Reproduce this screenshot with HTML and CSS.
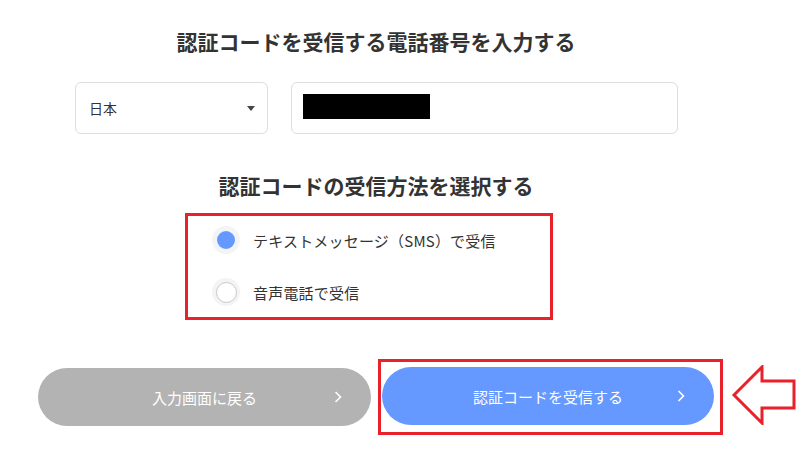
FILE: index.html
```html
<!DOCTYPE html>
<html lang="ja">
<head>
    <meta charset="UTF-8">
    <meta name="viewport" content="width=device-width, initial-scale=1.0">
    <title>認証コード</title>
    <link rel="stylesheet" href="styles.css">
</head>
<body>
    <div class="page">
        <h1>認証コードを受信する電話番号を入力する</h1>

        <div class="phone-row">
            <div class="select">
                <span>日本</span>
                <span class="caret"></span>
            </div>
            <div class="phone-input">
                <div class="masked"></div>
            </div>
        </div>

        <h1 class="sub">認証コードの受信方法を選択する</h1>

        <div class="methods mark">
            <label class="method">
                <input type="radio" name="method" checked>
                <span class="dot"></span>
                <span>テキストメッセージ（SMS）で受信</span>
            </label>
            <label class="method">
                <input type="radio" name="method">
                <span class="dot"></span>
                <span>音声電話で受信</span>
            </label>
        </div>

        <div class="actions">
            <button class="btn btn-back">
                <span></span>
                <span>入力画面に戻る</span>
                <svg class="chev" viewBox="0 0 8 12"><polyline points="1.5,1 6.5,6 1.5,11"/></svg>
            </button>
            <div class="mark btn-mark">
                <button class="btn btn-send">
                    <span></span>
                    <span>認証コードを受信する</span>
                    <svg class="chev" viewBox="0 0 8 12"><polyline points="1.5,1 6.5,6 1.5,11"/></svg>
                </button>
            </div>
            <svg class="arrow" viewBox="0 0 66 60">
                <polygon points="3,30 31,2 31,16 63,16 63,43 31,43 31,58"/>
            </svg>
        </div>
    </div>
</body>
</html>
```

FILE: styles.css
```css
* {
    margin: 0;
    padding: 0;
    box-sizing: border-box;
    font-family: "Noto Sans CJK JP", "Noto Sans", sans-serif;
}
body {
    background: #fff;
    color: #333;
}
.page {
    width: 676px;
    margin-left: 38px;
    padding-top: 25px;
}
h1 {
    font-size: 21px;
    font-weight: 700;
    line-height: 32px;
    text-align: center;
    color: #333;
}
.sub {
    margin-top: 35px;
}
.phone-row {
    display: flex;
    gap: 23px;
    margin-top: 25px;
    margin-left: 37px;
}
.select {
    width: 193px;
    height: 52px;
    border: 1px solid #dddddd;
    border-radius: 6px;
    display: flex;
    align-items: center;
    justify-content: space-between;
    padding: 0 12px 0 13px;
    font-size: 14px;
    color: #333;
}
.caret {
    width: 0;
    height: 0;
    border-left: 4px solid transparent;
    border-right: 4px solid transparent;
    border-top: 5px solid #444;
}
.phone-input {
    width: 387px;
    height: 52px;
    border: 1px solid #dddddd;
    border-radius: 6px;
    display: flex;
    align-items: center;
    padding-left: 11px;
}
.masked {
    width: 127px;
    height: 25px;
    background: #000;
    margin-top: -3px;
}
.mark {
    border: 3px solid #e8212b;
}
.methods {
    width: 368px;
    margin: 12px 0 0 147px;
    padding: 10px 0 11px 24px;
    display: flex;
    flex-direction: column;
    gap: 24px;
}
.method {
    display: flex;
    align-items: center;
    gap: 13px;
    height: 28px;
    font-size: 15px;
    letter-spacing: 0.2px;
    color: #333;
    cursor: pointer;
}
.method input {
    display: none;
}
.dot {
    width: 28px;
    height: 28px;
    border-radius: 50%;
    background: #f3f4f6;
    display: flex;
    align-items: center;
    justify-content: center;
}
.dot::after {
    content: "";
    width: 19px;
    height: 19px;
    border-radius: 50%;
    border: 1.5px solid #c8c8c8;
    background: #fff;
}
.method input:checked + .dot::after {
    border: none;
    background: #6699ff;
    width: 18px;
    height: 18px;
}
.actions {
    display: flex;
    align-items: center;
    margin-top: 39px;
}
.btn {
    flex-shrink: 0;
    width: 333px;
    height: 58px;
    border: none;
    border-radius: 29px;
    display: grid;
    grid-template-columns: 1fr auto 1fr;
    align-items: center;
    color: #fff;
    font-size: 15px;
    cursor: pointer;
    padding: 0 29px;
}
.btn-back {
    background: #b3b3b3;
}
.btn-send {
    width: 332px;
    background: #6699ff;
}
.chev {
    justify-self: end;
    width: 8px;
    height: 12px;
    fill: none;
    stroke: #fff;
    stroke-width: 1.6;
}
.btn-mark {
    flex-shrink: 0;
    margin-left: 7px;
    padding: 5px 6px 7px 1px;
}
.arrow {
    flex-shrink: 0;
    width: 66px;
    height: 60px;
    margin-left: 8px;
    margin-top: -4px;
    fill: #fff;
    stroke: #e8212b;
    stroke-width: 3;
}
```
